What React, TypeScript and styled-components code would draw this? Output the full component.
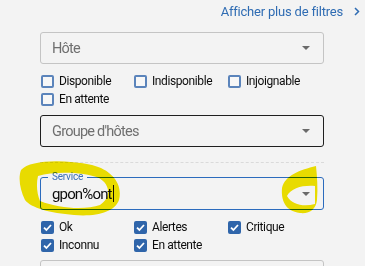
import React from "react";
import styled, { createGlobalStyle } from "styled-components";

const Global = createGlobalStyle`
  html, body { margin: 0; padding: 0; background: #f3f3f3; }
  body { font-family: Roboto, "Liberation Sans", Arial, sans-serif; }
  * { box-sizing: border-box; }
`;

const Page = styled.div`
  position: relative;
  width: 365px;
  height: 266px;
  overflow: hidden;
  background: #f3f3f3;
`;

const LinkRow = styled.div`
  display: flex;
  justify-content: flex-end;
  align-items: flex-start;
  height: 32px;
  padding: 4px 5px 0 0;
`;

const MoreLink = styled.a`
  display: flex;
  align-items: center;
  gap: 11px;
  color: #2f6cb3;
  font-size: 13px;
  line-height: 15px;
  letter-spacing: -0.2px;
  text-decoration: none;
`;

const Panel = styled.div`
  margin-left: 40px;
  width: 284px;
  display: flex;
  flex-direction: column;
`;

const Select = styled.div<{ $dark?: boolean; $mt?: number }>`
  height: 32px;
  margin-top: ${(p) => p.$mt ?? 0}px;
  border: 1px solid ${(p) => (p.$dark ? "#1f1f1f" : "#c4c4c4")};
  border-radius: 3px;
  display: flex;
  align-items: center;
  justify-content: space-between;
  padding: 0 13px 0 11px;
`;

const Placeholder = styled.span`
  color: #6f6f6f;
  font-size: 14.5px;
  letter-spacing: -0.75px;
`;

const Arrow = styled.span`
  width: 0;
  height: 0;
  border-left: 4.5px solid transparent;
  border-right: 4.5px solid transparent;
  border-top: 4.5px solid #6a6a6a;
`;

const CheckGrid = styled.div<{ $mt: number }>`
  display: grid;
  grid-template-columns: 93px 94px auto;
  grid-auto-rows: 18px;
  margin-top: ${(p) => p.$mt}px;
  padding-left: 1px;
`;

const CheckItem = styled.label`
  display: flex;
  align-items: center;
  gap: 5px;
  font-size: 12px;
  letter-spacing: -0.4px;
  color: #0d0d0d;
`;

const Box = styled.span<{ $checked?: boolean }>`
  width: 13px;
  height: 13px;
  border-radius: 2px;
  flex: none;
  display: flex;
  align-items: center;
  justify-content: center;
  border: ${(p) => (p.$checked ? "none" : "2px solid #5b84bb")};
  background: ${(p) => (p.$checked ? "#2f65aa" : "#f7f7f7")};
`;

const Divider = styled.div`
  margin-top: 15px;
  border-top: 1px dashed #dadada;
`;

const Field = styled.div`
  position: relative;
  margin-top: 14px;
  height: 33px;
  border: 1px solid #2b6bbd;
  border-radius: 3px;
  display: flex;
  align-items: center;
  justify-content: space-between;
  padding: 0 13px 0 11px;
`;

const Legend = styled.span`
  position: absolute;
  top: -7px;
  left: 7px;
  padding: 0 4px;
  background: #f3f3f3;
  color: #3b70b6;
  font-size: 10px;
  line-height: 12px;
  letter-spacing: -0.2px;
`;

const InputText = styled.span`
  display: flex;
  align-items: center;
  color: #0d0d0d;
  font-size: 15px;
  letter-spacing: -0.85px;
`;

const Caret = styled.span`
  width: 1px;
  height: 17px;
  background: #111;
  margin-left: 1px;
`;

const NextBox = styled.div`
  margin-top: 6px;
  height: 30px;
  border: 1px solid #c4c4c4;
  border-radius: 3px;
`;

const Highlights = styled.svg`
  position: absolute;
  left: 0;
  top: 0;
  pointer-events: none;
  mix-blend-mode: multiply;
`;

const Check = ({ label, checked }: { label: string; checked?: boolean }) => (
  <CheckItem>
    <Box $checked={checked}>
      {checked && (
        <svg width="11" height="11" viewBox="0 0 11 11">
          <path d="M2 5.6 L4.4 8 L9 3" fill="none" stroke="#fff" strokeWidth="1.8" />
        </svg>
      )}
    </Box>
    {label}
  </CheckItem>
);

export default function App() {
  return (
    <Page>
      <Global />
      <LinkRow>
        <MoreLink href="#">
          Afficher plus de filtres
          <svg width="6" height="9" viewBox="0 0 6 9">
            <path d="M1 1 L4.5 4.5 L1 8" fill="none" stroke="#2f6cb3" strokeWidth="1.5" />
          </svg>
        </MoreLink>
      </LinkRow>
      <Panel>
        <Select>
          <Placeholder>Hôte</Placeholder>
          <Arrow />
        </Select>
        <CheckGrid $mt={8}>
          <Check label="Disponible" />
          <Check label="Indisponible" />
          <Check label="Injoignable" />
          <Check label="En attente" />
        </CheckGrid>
        <Select $dark $mt={7}>
          <Placeholder>Groupe d'hôtes</Placeholder>
          <Arrow />
        </Select>
        <Divider />
        <Field>
          <Legend>Service</Legend>
          <InputText>
            gpon%ont
            <Caret />
          </InputText>
          <Arrow />
        </Field>
        <CheckGrid $mt={8}>
          <Check label="Ok" checked />
          <Check label="Alertes" checked />
          <Check label="Critique" checked />
          <Check label="Inconnu" checked />
          <Check label="En attente" checked />
        </CheckGrid>
        <NextBox />
      </Panel>
      <Highlights width="365" height="266" viewBox="0 0 365 266">
        <path
          fillRule="evenodd"
          fill="#f4e600"
          d="M21 170 C30 160 62 159 92 165 C112 170 123 184 119 200 C115 212 96 217 74 215 C50 213 31 208 25 200 C20 190 18 178 21 170 Z
             M38 176 C55 171 84 172 99 178 C111 185 111 198 100 205 C86 210 60 209 40 201 C37 194 36 184 38 176 Z"
        />
        <path
          fillRule="evenodd"
          fill="#f4e600"
          d="M316 166 C300 170 285 175 282 188 C281 200 285 211 300 213 C310 214 316 209 317 200 C318 188 317 176 316 166 Z
             M287 196 C291 188 303 185 315 186 L315 204 C304 207 292 205 287 196 Z"
        />
      </Highlights>
    </Page>
  );
}
